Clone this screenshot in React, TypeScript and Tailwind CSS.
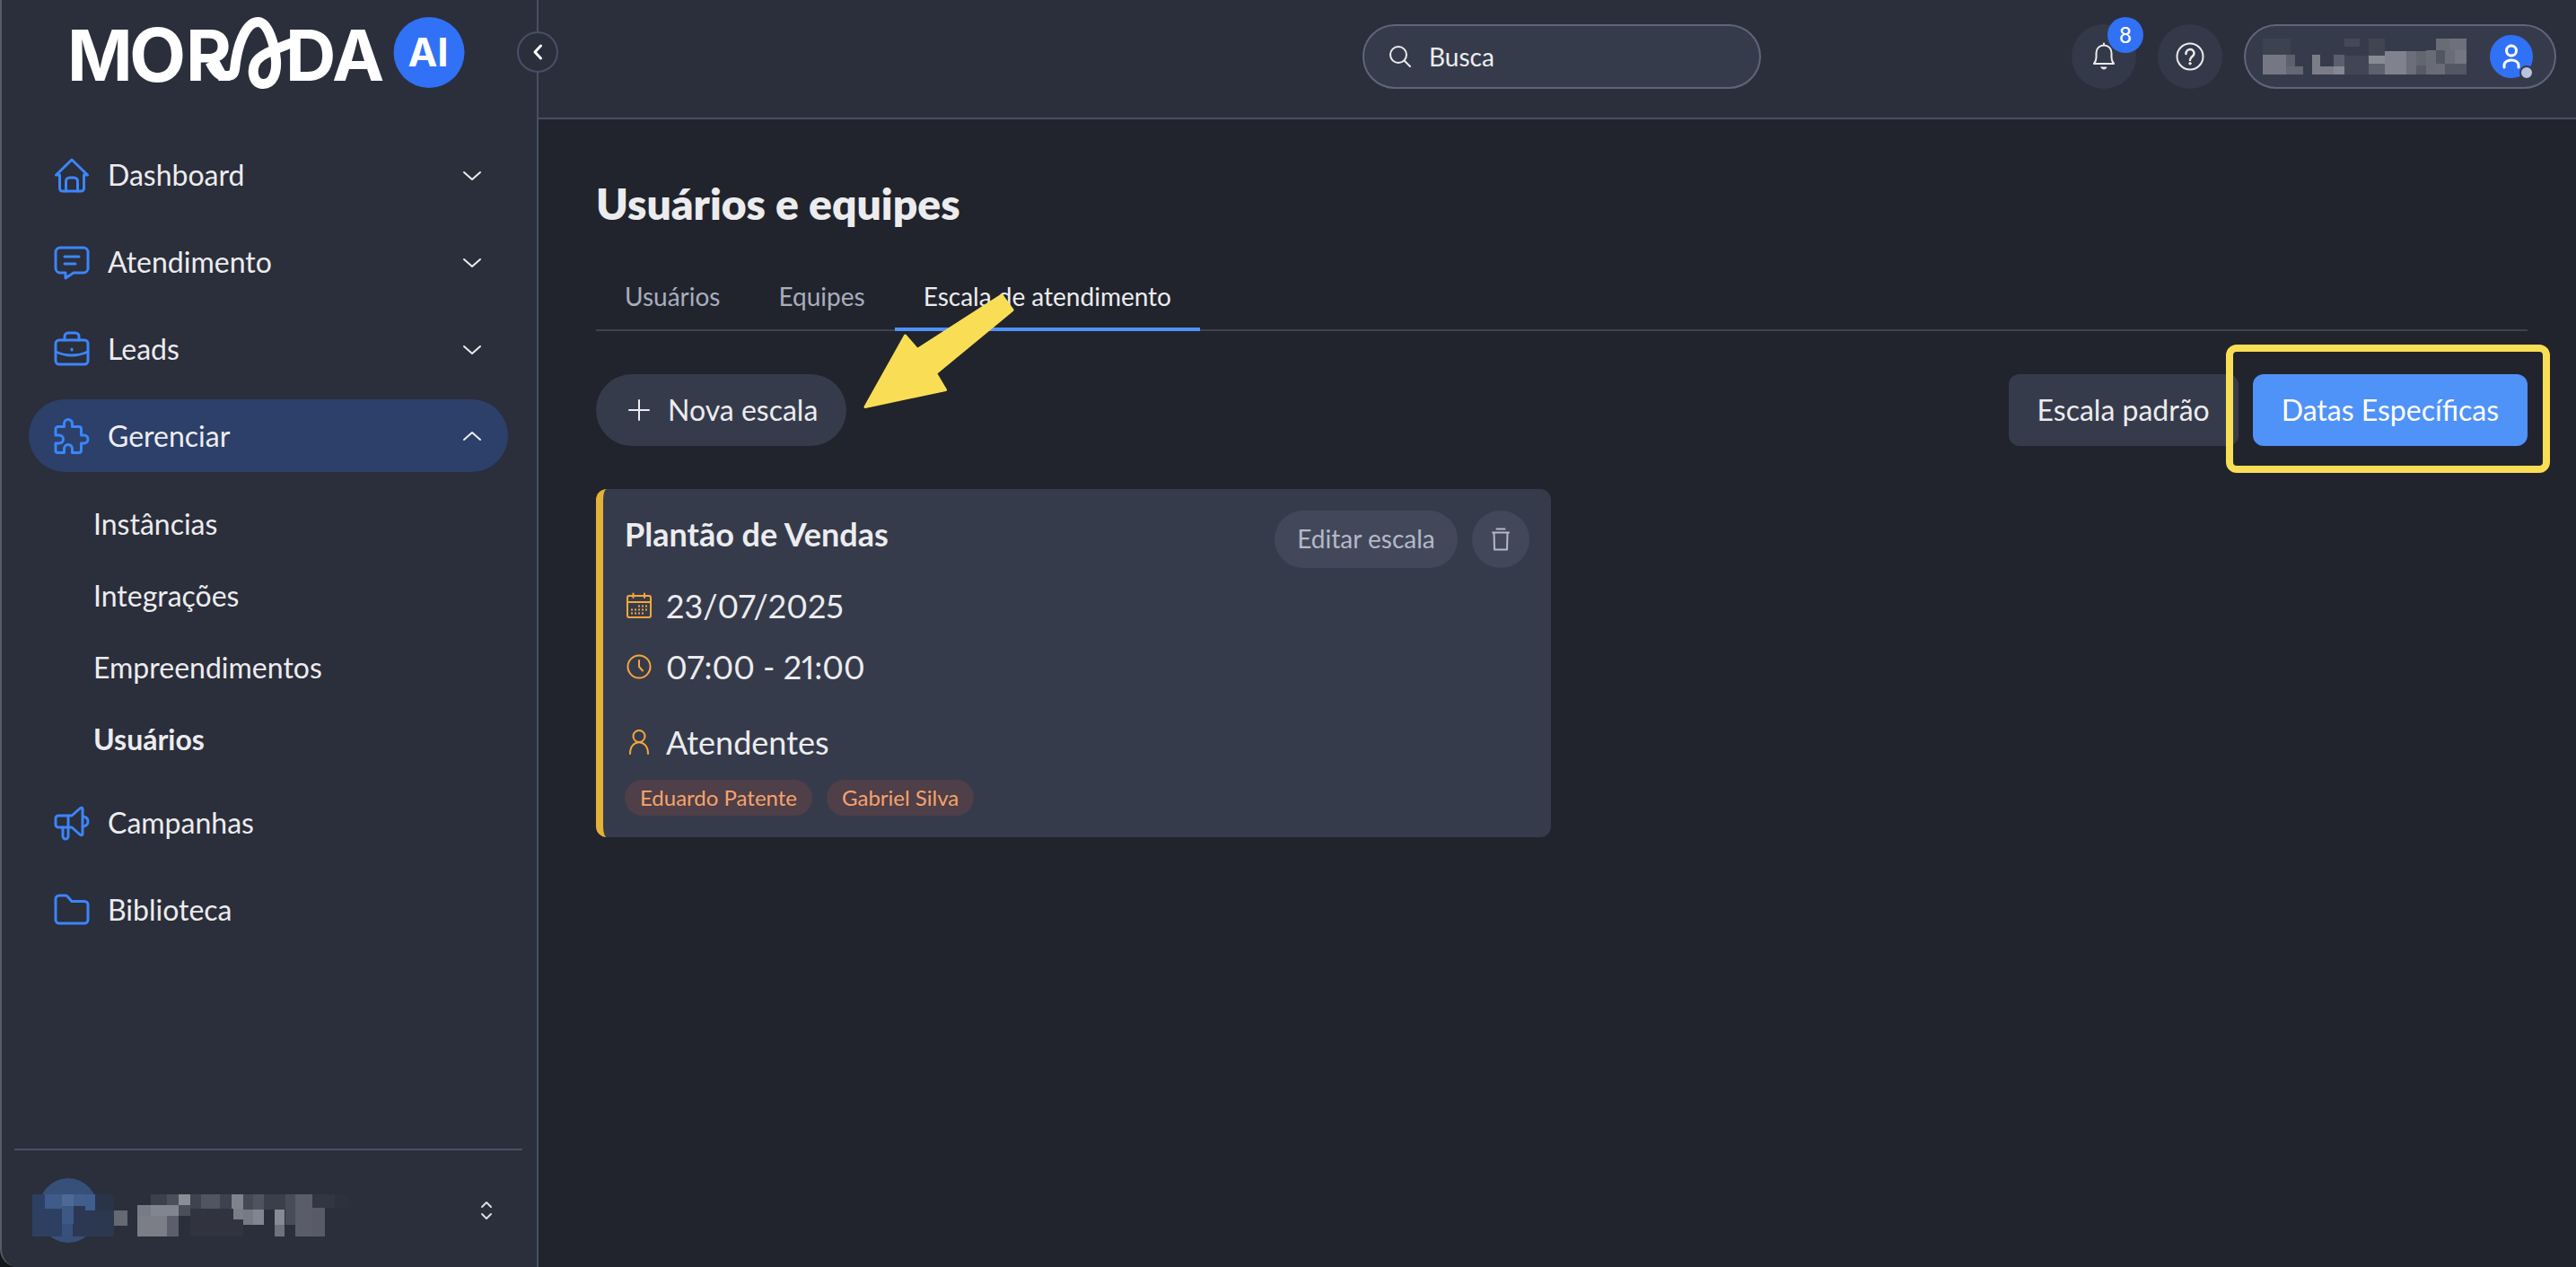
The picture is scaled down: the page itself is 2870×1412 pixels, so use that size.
import type { ReactNode } from "react";

type Block = [number, number, number, number, string];

const nameBlocks: Block[] = [
  [93, 60, 186, 114, "#3d4250"],
  [93, 114, 171, 180, "#757884"],
  [171, 114, 201, 153, "#5d606d"],
  [171, 153, 228, 180, "#646774"],
  [258, 114, 285, 180, "#7b7e88"],
  [285, 153, 330, 180, "#7a7d87"],
  [330, 114, 366, 153, "#5b5f6d"],
  [330, 153, 366, 180, "#858892"],
  [366, 60, 417, 87, "#454956"],
  [366, 117, 447, 180, "#424654"],
  [447, 60, 501, 117, "#414552"],
  [447, 117, 501, 144, "#888b95"],
  [447, 144, 501, 180, "#5d616e"],
  [501, 102, 573, 180, "#80838d"],
  [573, 102, 606, 180, "#6b6e7a"],
  [606, 102, 639, 150, "#63666f"],
  [606, 150, 639, 180, "#565a67"],
  [639, 99, 672, 180, "#696c77"],
  [672, 60, 717, 99, "#696c75"],
  [717, 60, 774, 99, "#6e717b"],
  [672, 99, 702, 144, "#525663"],
  [672, 144, 702, 180, "#6a6d78"],
  [702, 99, 735, 144, "#6a6d78"],
  [735, 99, 774, 144, "#747781"],
  [702, 144, 774, 180, "#535764"],
];

const accountBlocks: Block[] = [
  [88, 273, 169, 413, "#2e4061"],
  [122, 273, 169, 321, "#3f5b8a"],
  [169, 273, 201, 312, "#4e6996"],
  [201, 273, 233, 312, "#425e8d"],
  [233, 273, 260, 327, "#3f5d8e"],
  [169, 312, 201, 372, "#3c5884"],
  [169, 372, 198, 413, "#37517c"],
  [201, 312, 233, 413, "#2c3851"],
  [198, 372, 260, 413, "#2c3851"],
  [233, 327, 260, 413, "#2c3851"],
  [260, 273, 311, 327, "#2b3447"],
  [260, 327, 311, 413, "#2c3850"],
  [311, 327, 348, 378, "#666972"],
  [412, 273, 456, 309, "#3c404d"],
  [456, 273, 488, 309, "#4b4e5b"],
  [488, 273, 519, 309, "#8b8e97"],
  [375, 309, 412, 345, "#787b85"],
  [412, 309, 488, 345, "#82858f"],
  [375, 345, 456, 413, "#7b7d87"],
  [456, 345, 488, 413, "#5c5f6b"],
  [488, 309, 519, 345, "#4b4e5b"],
  [519, 273, 549, 321, "#3f424f"],
  [549, 273, 600, 321, "#515562"],
  [600, 273, 632, 321, "#3e414e"],
  [519, 321, 664, 413, "#31343f"],
  [632, 273, 664, 321, "#80838c"],
  [637, 321, 664, 357, "#7b7e88"],
  [664, 273, 691, 324, "#454955"],
  [691, 273, 720, 324, "#50535f"],
  [720, 273, 779, 324, "#3b3e4b"],
  [664, 324, 691, 375, "#777a84"],
  [691, 324, 720, 375, "#82858f"],
  [779, 273, 806, 375, "#484b58"],
  [750, 324, 777, 375, "#878a93"],
  [750, 375, 777, 413, "#6f717c"],
  [806, 273, 853, 413, "#5a5d69"],
  [853, 318, 887, 413, "#585b67"],
  [853, 273, 915, 318, "#333642"],
  [915, 273, 950, 318, "#2e313d"],
];

function Blocks({ items }: { items: Block[] }) {
  return (
    <g shapeRendering="crispEdges">
      {items.map(([x1, y1, x2, y2, c], i) => (
        <rect key={i} x={x1} y={y1} width={x2 - x1} height={y2 - y1} fill={c} />
      ))}
    </g>
  );
}

function Icon({
  children,
  className,
  box = 40,
  stroke = 3,
}: {
  children: ReactNode;
  className: string;
  box?: number;
  stroke?: number;
}) {
  return (
    <svg
      aria-hidden="true"
      viewBox={`0 0 ${box} ${box}`}
      className={`shrink-0 ${className}`}
      fill="none"
      stroke="currentColor"
      strokeWidth={stroke}
      strokeLinecap="round"
      strokeLinejoin="round"
    >
      {children}
    </svg>
  );
}

function Logo() {
  return (
    <svg aria-label="Morada AI" role="img" viewBox="0 -9 450 108" className="h-[108px] w-[450px] overflow-visible">
      <g fill="#fff" fontFamily="Inter, sans-serif" fontWeight="700" fontSize="78">
        <text x="5" y="75">M</text>
        <text x="74" y="76" fontSize="82">O</text>
        <text x="137" y="75">R</text>
        <text x="248" y="75">D</text>
        <text x="300" y="75">A</text>
      </g>
      <path
        d="M164 54 C170 66 174 70 184 69.500 C193 69 191 62 193 51 C197 28 206 9.500 217.500 9.500 C229 9.500 236 36 237.500 52 C238.500 68 233 78.500 223.500 78.500 C212 78.500 210 64 214.500 55 C219 46 232 42 257 32"
        fill="none"
        stroke="#fff"
        strokeWidth="11"
        strokeLinecap="butt"
      />
      <circle cx="408" cy="43.500" r="39.500" fill="#3071f6" />
      <text x="407" y="59" textAnchor="middle" fill="#fff" fontFamily="Inter, sans-serif" fontWeight="700" fontSize="44">
        AI
      </text>
    </svg>
  );
}

function Chevron({ up = false }: { up?: boolean }) {
  return (
    <Icon className="ml-auto size-6 text-[#ececee]" box={24} stroke={2}>
      <path d={up ? "M3 16 L12 8 L21 16" : "M3 9 L12 17 L21 9"} />
    </Icon>
  );
}

const icons = {
  home: (
    <>
      <path d="M6.500 20 H2.500 L20 3 L37.500 20 H33.500" />
      <path d="M6.500 20 V35 a3 3 0 0 0 3 3 H30.500 a3 3 0 0 0 3-3 V20" />
      <path d="M13.500 38 V27 a4 4 0 0 1 4-4 h5 a4 4 0 0 1 4 4 V38" />
    </>
  ),
  chat: (
    <>
      <path d="M7 4 H33 a5 5 0 0 1 5 5 V27 a5 5 0 0 1-5 5 H22 L13 38 V32 H7 a5 5 0 0 1-5-5 V9 a5 5 0 0 1 5-5 z" />
      <path d="M12 14 H28 M12 22 H24" />
    </>
  ),
  briefcase: (
    <>
      <rect x="2" y="10" width="36" height="27" rx="4" />
      <path d="M12 10 V6 a4 4 0 0 1 4-4 H24 a4 4 0 0 1 4 4 V10" />
      <path d="M2 23 Q20 31 38 23 M20 20 V21" />
    </>
  ),
  puzzle: (
    <path d="M4.500 9.500 H11.500 V6 a4.500 4.500 0 0 1 9 0 V9.500 H28 a2.500 2.500 0 0 1 2.500 2.500 V19 H33.500 a4.500 4.500 0 0 1 0 9 H30.500 V36 a2.500 2.500 0 0 1 -2.500 2.500 H20.500 V34 a4.500 4.500 0 0 0 -9 0 V38.500 H4.500 a2.500 2.500 0 0 1 -2.500 -2.500 V28 H6 a4.500 4.500 0 0 0 0 -9 H2 V12 a2.500 2.500 0 0 1 2.500 -2.500 z" />
  ),
  megaphone: (
    <>
      <path d="M16 12 H5 a3 3 0 0 0-3 3 V22 a3 3 0 0 0 3 3 H16 z" />
      <path d="M16 12 H20 L29 4 Q32 2 32 5 V32 Q32 35 29 33 L20 25 H16" />
      <path d="M33 13 Q38 14 38 18.500 Q38 23 33 24" />
      <path d="M10 25 V35 a3 3 0 0 0 6 0 V25" />
    </>
  ),
  folder: (
    <path d="M6 4 H13 Q15 4 16 6 L20 10.500 H34 a4 4 0 0 1 4 4 V31 a4 4 0 0 1-4 4 H6 a4 4 0 0 1-4-4 V8 a4 4 0 0 1 4-4 z" />
  ),
};

function NavItem({
  icon,
  label,
  chevron,
  active,
}: {
  icon: ReactNode;
  label: string;
  chevron?: "up" | "down";
  active?: boolean;
}) {
  return (
    <button
      type="button"
      className={`flex h-[81px] w-full items-center gap-5 rounded-full pr-7 pl-7 text-left text-[32px] ${active ? "bg-[#2c406a]" : ""}`}
    >
      <Icon className="size-10 text-[#3b86fb]">{icon}</Icon>
      <span>{label}</span>
      {chevron && <Chevron up={chevron === "up"} />}
    </button>
  );
}

function Sidebar() {
  return (
    <aside className="relative flex w-[600px] shrink-0 flex-col rounded-bl-[20px] border-r-2 border-l-2 border-r-[#475066] border-l-[#585b66] bg-[#2b2e3b]">
      <div className="pt-[6px] pl-[68px]">
        <Logo />
      </div>
      <button
        type="button"
        aria-label="Recolher menu"
        className="absolute top-[35px] -right-6 z-10 flex size-[46px] items-center justify-center rounded-full border-2 border-[#475066] bg-[#2b2e3b]"
      >
        <Icon className="size-6 text-white" box={24} stroke={3}>
          <path d="M15.500 5 L9 12 L15.500 19" />
        </Icon>
      </button>
      <nav className="mt-10 flex flex-col gap-4 pr-8 pl-[30px]">
        <NavItem icon={icons.home} label="Dashboard" chevron="down" />
        <NavItem icon={icons.chat} label="Atendimento" chevron="down" />
        <NavItem icon={icons.briefcase} label="Leads" chevron="down" />
        <NavItem icon={icons.puzzle} label="Gerenciar" chevron="up" active />
        <ul className="-mb-1 pt-0.5 text-[32px]">
          {["Instâncias", "Integrações", "Empreendimentos"].map((t) => (
            <li key={t}>
              <a href="#" className="flex h-20 items-center pl-[72px]">{t}</a>
            </li>
          ))}
          <li>
            <a href="#" className="flex h-20 items-center pl-[72px] font-bold">Usuários</a>
          </li>
        </ul>
        <NavItem icon={icons.megaphone} label="Campanhas" />
        <NavItem icon={icons.folder} label="Biblioteca" />
      </nav>
      <div className="mt-auto mr-4 ml-[14px] flex h-[132px] items-center justify-between border-t-2 border-[#475063] pt-1 pr-7 pl-5">
        <svg aria-hidden="true" viewBox="88 219 870 216" preserveAspectRatio="none" className="h-[72px] w-[355px]">
          <ellipse cx="186" cy="327" rx="82" ry="108" fill="#375079" />
          <Blocks items={accountBlocks} />
        </svg>
        <button type="button" aria-label="Trocar conta">
          <Icon className="size-6 text-[#dcdde1]" box={24} stroke={2}>
            <path d="M7 8 L12 3 L17 8 M7 16 L12 21 L17 16" />
          </Icon>
        </button>
      </div>
    </aside>
  );
}

function TopBar() {
  return (
    <header className="grid h-[133px] grid-cols-[1fr_444px_1fr] border-b-2 border-[#475066] bg-[#2b2e3b] pt-[27px] pr-[22px] pl-8">
      <div />
      <label className="flex h-[72px] items-center gap-5 rounded-full border-2 border-[#5f667b] bg-[#363b4c] pl-7">
        <Icon className="size-6" box={24} stroke={2}>
          <circle cx="10" cy="10" r="9" />
          <path d="M16.500 16.500 L23 23" />
        </Icon>
        <input
          type="text"
          aria-label="Busca"
          placeholder="Busca"
          className="w-80 bg-transparent text-[28px] outline-none placeholder:text-[#ececee]"
        />
      </label>
      <div className="flex justify-end gap-6">
        <button
          type="button"
          aria-label="Notificações"
          className="relative flex size-[72px] items-center justify-center rounded-full bg-[#343949]"
        >
          <Icon className="size-8" box={32} stroke={2}>
            <path d="M5 24 H27 Q24.500 21 24.500 17 V12 C24.500 7 21 3.500 16 3.500 C11 3.500 7.500 7 7.500 12 V17 Q7.500 21 5 24 z M16 3.500 V1.500" />
            <path d="M13 28 H19 Q18.500 30 16 30 Q13.500 30 13 28 z" fill="currentColor" strokeWidth="1" />
          </Icon>
          <span className="absolute -top-2 left-10 flex size-10 items-center justify-center rounded-full bg-[#3071f6] text-2xl font-medium text-white">
            8
          </span>
        </button>
        <button
          type="button"
          aria-label="Ajuda"
          className="flex size-[72px] items-center justify-center rounded-full bg-[#343949]"
        >
          <Icon className="size-8" box={32} stroke={2}>
            <circle cx="16" cy="16" r="14.500" />
            <path d="M11.500 13 C11.500 6.500 20.500 6.500 20.500 12.500 C20.500 16 16 16 16 20" strokeWidth="2.500" />
            <circle cx="16" cy="23.800" r="1.200" fill="currentColor" strokeWidth="1" />
          </Icon>
        </button>
        <button
          type="button"
          aria-label="Perfil"
          className="flex h-[72px] w-[348px] items-center justify-between rounded-full border-2 border-[#5f667b] bg-[#363b4c] pr-6 pl-[19px]"
        >
          <svg aria-hidden="true" viewBox="93 60 684 120" className="h-10 w-[228px]">
            <Blocks items={nameBlocks} />
          </svg>
          <span className="relative size-12 rounded-full bg-[#3071f6] text-white">
            <Icon className="size-12" box={48} stroke={3}>
              <circle cx="24" cy="17.500" r="5.500" />
              <path d="M16 36 V34 C16 26 32 26 32 34 V36" />
            </Icon>
            <span className="absolute top-[34px] left-[33px] size-4 rounded-full border-2 border-[#363b4c] bg-[#b9c5df]" />
          </span>
        </button>
      </div>
    </header>
  );
}

function ScheduleCard() {
  return (
    <article className="rounded-xl border-l-8 border-[#e3b236] bg-[#363b4c] p-6 text-4xl">
      <div className="flex h-16 justify-between">
        <h2 className="leading-[52px] font-bold">Plantão de Vendas</h2>
        <div className="flex gap-4">
          <button type="button" className="h-16 w-[204px] rounded-full bg-[#42485a] text-[28px] text-[#b4b8c8]">
            Editar escala
          </button>
          <button
            type="button"
            aria-label="Excluir escala"
            className="flex size-16 items-center justify-center rounded-full bg-[#42485a] text-[#b4b8c8]"
          >
            <Icon className="size-7" box={28} stroke={2}>
              <path d="M5 6.500 H23 M9.500 2.500 H18.500 M6.500 6.500 L7 25.500 H21 L21.500 6.500" />
            </Icon>
          </button>
        </div>
      </div>
      <p className="mt-5 flex h-11 items-center gap-3.5 proportional-nums">
        <Icon className="size-8 text-[#f5a83a]" box={32} stroke={2}>
          <rect x="3" y="5" width="26" height="24" rx="2" />
          <path d="M3 12 H29 M9.500 2.500 V7 M22 2.500 V7" />
          <path d="M15 16.500 H27 M7 20.500 H27 M7 24.500 H23" strokeDasharray="2 2" strokeLinecap="butt" />
        </Icon>
        23/07/2025
      </p>
      <p className="mt-6 flex h-11 items-center gap-3.5 proportional-nums">
        <Icon className="size-8 text-[#f5a83a]" box={32} stroke={2}>
          <circle cx="16" cy="16" r="12.500" />
          <path d="M16 9 V16 L20 20.500" />
        </Icon>
        07:00 - 21:00
      </p>
      <p className="mt-10 flex h-11 items-center gap-3.5">
        <Icon className="size-8 text-[#f5a83a]" box={32} stroke={2}>
          <circle cx="16" cy="9.500" r="6.500" />
          <path d="M6 29 C6 12 26 12 26 29" />
        </Icon>
        Atendentes
      </p>
      <ul className="mt-5 flex gap-4 text-2xl text-[#f6a36c]">
        {["Eduardo Patente", "Gabriel Silva"].map((n) => (
          <li key={n} className="flex h-10 items-center rounded-full bg-[#4e3f48] px-[17px]">{n}</li>
        ))}
      </ul>
    </article>
  );
}

export default function App() {
  return (
    <div className="flex min-h-screen bg-[#15161b] font-['Lato',sans-serif] leading-normal text-[#ececee]">
      <Sidebar />
      <div className="flex min-w-0 flex-1 flex-col bg-[#21242d]">
        <TopBar />
        <main className="pt-16 pr-[54px] pl-16">
          <h1 className="text-5xl leading-[60px] font-extrabold">Usuários e equipes</h1>
          <div role="tablist" className="mt-10 flex h-[72px] border-b-2 border-[#3e414f] text-[28px] text-[#a9adbd]">
            <button type="button" role="tab" className="px-8 pb-1">Usuários</button>
            <button type="button" role="tab" className="px-[33px] pb-1">Equipes</button>
            <button
              type="button"
              role="tab"
              aria-selected="true"
              className="-mb-[2px] border-b-4 border-[#4f92f8] px-8 pb-0.5 text-[#ececee]"
            >
              Escala de atendimento
            </button>
          </div>
          <div className="mt-12 flex items-center justify-between text-[32px]">
            <div className="relative">
              <button type="button" className="flex h-20 items-center gap-4 rounded-full bg-[#363b4c] px-8">
                <Icon className="size-8" box={32} stroke={2}>
                  <path d="M5 16 H27 M16 5 V27" />
                </Icon>
                Nova escala
              </button>
              <svg
                aria-hidden="true"
                viewBox="962 325 170 132"
                className="pointer-events-none absolute -top-[92px] left-[298px] h-[132px] w-[170px]"
              >
                <path
                  d="M964 453.500 L1008.500 374 L1022 389.500 L1116 329 L1128 345.500 L1042.500 416 L1053.500 434.500 Z"
                  fill="#f9de55"
                  stroke="#f9de55"
                  strokeWidth="3"
                  strokeLinejoin="round"
                />
              </svg>
            </div>
            <div className="flex gap-4">
              <button type="button" className="h-20 rounded-xl bg-[#363b4c] px-8">Escala padrão</button>
              <button type="button" className="relative h-20 rounded-xl bg-[#4f92f8] px-8 text-white">
                Datas Específicas
                <span className="pointer-events-none absolute -top-[33px] -right-[25px] -bottom-[30px] -left-[30px] rounded-xl border-8 border-[#f9de55]" />
              </button>
            </div>
          </div>
          <div className="mt-12 grid grid-cols-2 gap-6">
            <ScheduleCard />
          </div>
        </main>
      </div>
    </div>
  );
}
